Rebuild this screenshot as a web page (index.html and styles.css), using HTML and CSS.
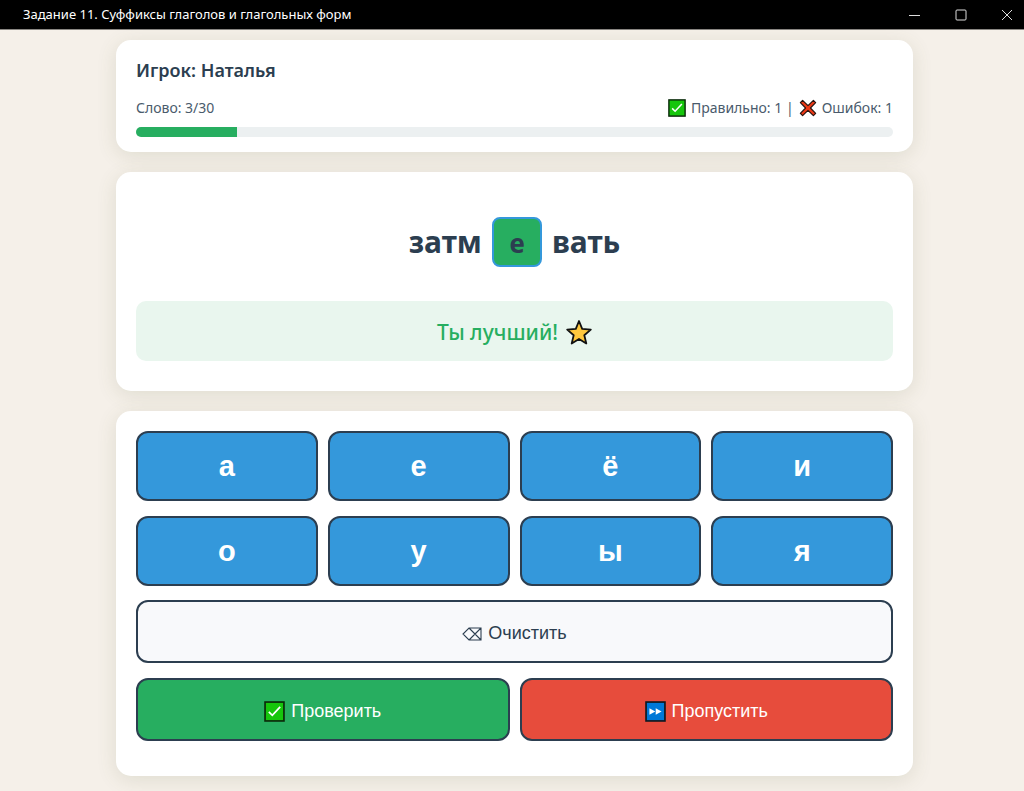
FILE: index.html
```
<!DOCTYPE html>
<html lang="ru">

<head>
    <meta charset="UTF-8">
    <title>Задание 11. Суффиксы глаголов и глагольных форм</title>
    <link rel="stylesheet" href="styles.css">
</head>

<body>
    <!-- общие значки -->
    <svg class="sprite" aria-hidden="true">
        <symbol id="check" viewBox="0 0 20 20">
            <rect x="1" y="1" width="18" height="18" fill="#16c60c" stroke="#0b2a0b" stroke-width="1.6"/>
            <path d="M4.6 10.4l3.3 3.2 7.5-8" fill="none" stroke="#fff" stroke-width="1.7"/>
        </symbol>
        <symbol id="cross" viewBox="0 0 20 20">
            <path d="M1.500 4L4 1.500l6 5.800 6-5.800L18.500 4l-5.800 6 5.800 6-2.500 2.500-6-5.800-6 5.800L1.500 16l5.800-6z" fill="#f03a17" stroke="#26120e" stroke-width="1.3" stroke-linejoin="round"/>
        </symbol>
        <symbol id="star" viewBox="0 0 26 26">
            <path d="M13 2l3.200 7.900 8.600.7-6.500 5.600 2 8.300-7.300-4.500-7.300 4.500 2-8.300L1.200 10.600l8.600-.7z" fill="#ffc83d" stroke="#111" stroke-width="1.8" stroke-linejoin="round"/>
        </symbol>
        <symbol id="skip" viewBox="0 0 20 20">
            <rect x="1" y="1" width="18" height="18" fill="#0078d7" stroke="#101820" stroke-width="1.6"/>
            <path d="M4.200 7l5.600 3-5.600 3zM10.200 7l5.600 3-5.600 3z" fill="#fff"/>
        </symbol>
        <symbol id="erase" viewBox="0 0 20 14">
            <path d="M7 1h12v12H7L1 7zM7 1l12 12M19 1L7 13" fill="none" stroke="currentColor" stroke-width="1.1"/>
        </symbol>
    </svg>

    <header class="titlebar">
        <span class="title">Задание 11. Суффиксы глаголов и глагольных форм</span>
        <div class="window-buttons">
            <button type="button" aria-label="Свернуть"><svg width="12" height="12"><path d="M0 6.500h11"/></svg></button>
            <button type="button" aria-label="Развернуть"><svg width="12" height="12"><rect x="1" y="1" width="10" height="10" rx="1"/></svg></button>
            <button type="button" aria-label="Закрыть"><svg width="12" height="12"><path d="M1 1l10 10M11 1L1 11"/></svg></button>
        </div>
    </header>

    <main class="container">
        <section class="card stats">
            <h1>Игрок: Наталья</h1>
            <div class="stats-row">
                <span>Слово: 3/30</span>
                <span class="score">
                    <svg class="icon-small"><use href="#check"/></svg>
                    <span>Правильно: 1 |</span>
                    <svg class="icon-small"><use href="#cross"/></svg>
                    <span>Ошибок: 1</span>
                </span>
            </div>
            <div class="progress">
                <div class="progress-fill" style="width: 13.3%"></div>
            </div>
        </section>

        <section class="card game">
            <div class="word">
                <span>затм</span>
                <span class="letter-box">е</span>
                <span>вать</span>
            </div>
            <div class="message">
                <span>Ты лучший!</span>
                <svg class="icon-star"><use href="#star"/></svg>
            </div>
        </section>

        <section class="card keyboard">
            <div class="letters">
                <button type="button">а</button>
                <button type="button">е</button>
                <button type="button">ё</button>
                <button type="button">и</button>
                <button type="button">о</button>
                <button type="button">у</button>
                <button type="button">ы</button>
                <button type="button">я</button>
            </div>
            <button type="button" class="action clear"><svg class="icon-erase"><use href="#erase"/></svg>Очистить</button>
            <div class="actions">
                <button type="button" class="action check"><svg class="icon"><use href="#check"/></svg>Проверить</button>
                <button type="button" class="action skip"><svg class="icon"><use href="#skip"/></svg>Пропустить</button>
            </div>
        </section>
    </main>
</body>

</html>
```
FILE: styles.css
```
* {
    box-sizing: border-box;
    margin: 0;
    padding: 0;
}

body {
    background: #f5f0e9;
    color: #2c3e50;
    font-family: "Noto Sans", "Open Sans", sans-serif;
}

.sprite {
    display: none;
}

.titlebar {
    display: flex;
    justify-content: space-between;
    align-items: center;
    height: 30px;
    padding-left: 23px;
    background: #000;
    border-bottom: 1px solid #8a8783;
    color: #fff;
    font-size: 13px;
    overflow: hidden;
}

.title {
    line-height: 26px;
    padding-bottom: 2px;
}

.window-buttons {
    display: flex;
    margin-right: -6px;
}

.window-buttons button {
    display: flex;
    justify-content: center;
    align-items: center;
    width: 46px;
    height: 29px;
    background: none;
    border: none;
}

.window-buttons svg {
    fill: none;
    stroke: #ddd;
}

.container {
    display: flex;
    flex-direction: column;
    gap: 20px;
    max-width: 802px;
    margin: 0 auto;
    padding: 10px 0 15px 5px;
}

.card {
    background: #fff;
    border-radius: 15px;
    padding: 20px;
    box-shadow: 0 4px 20px rgba(90, 100, 60, .14);
}

.stats {
    padding-top: 18px;
    padding-bottom: 15px;
}

h1 {
    font-size: 18px;
    line-height: 24px;
    font-weight: 600;
    margin-bottom: 14px;
}

.stats-row {
    display: flex;
    justify-content: space-between;
    align-items: center;
    margin-bottom: 7px;
    font-size: 14px;
    line-height: 24px;
    color: #4a5b6c;
}

.score {
    display: flex;
    align-items: center;
    gap: 5px;
}

.icon-small {
    width: 18px;
    height: 18px;
}

.progress {
    height: 10px;
    border-radius: 5px;
    background: #ecf0f1;
    overflow: hidden;
}

.progress-fill {
    height: 100%;
    background: #27ae60;
}

.game {
    padding: 44px 20px 30px;
}

.word {
    display: flex;
    justify-content: center;
    align-items: center;
    gap: 10px;
    margin-bottom: 33px;
    font-size: 30px;
    font-weight: 700;
    line-height: 52px;
}

.letter-box {
    width: 50px;
    height: 50px;
    background: #27ae60;
    border: 2px solid #3498db;
    border-radius: 8px;
    text-align: center;
    font-size: 26px;
    line-height: 48px;
}

.message {
    display: flex;
    justify-content: center;
    align-items: center;
    gap: 8px;
    height: 60px;
    padding-top: 2px;
    background: #e9f6ee;
    border-radius: 10px;
    color: #27ae60;
    font-size: 21px;
    font-weight: 500;
}

.icon-star {
    width: 26px;
    height: 26px;
}

.keyboard {
    padding-bottom: 35px;
}

.letters {
    display: grid;
    grid-template-columns: repeat(4, 1fr);
    gap: 15px 10px;
    margin-bottom: 14px;
}

.letters button,
.action {
    border: 2px solid #2c3e50;
    border-radius: 12px;
    font-family: "Liberation Sans", Arial, sans-serif;
    cursor: pointer;
}

.letters button {
    height: 70px;
    background: #3498db;
    color: #fff;
    font-size: 29px;
    font-weight: 700;
}

.action {
    display: flex;
    justify-content: center;
    align-items: center;
    gap: 6px;
    width: 100%;
    height: 63px;
    padding-top: 4px;
    color: #fff;
    font-size: 18px;
}

.clear {
    background: #f8f9fb;
    color: #2c3e50;
    margin-bottom: 15px;
}

.actions {
    display: grid;
    grid-template-columns: 1fr 1fr;
    gap: 10px;
}

.check {
    background: #27ae60;
}

.skip {
    background: #e74c3c;
}

.icon {
    width: 21px;
    height: 21px;
}

.icon-erase {
    width: 20px;
    height: 14px;
}
```
